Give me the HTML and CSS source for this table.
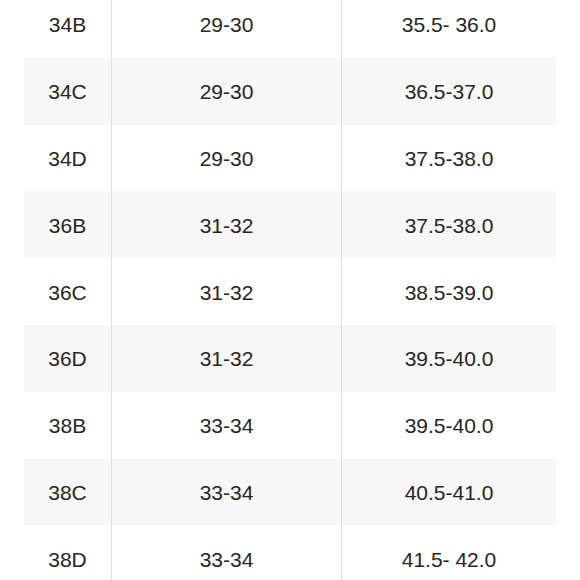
FILE: index.html
```html
<!DOCTYPE html>
<html>
<head>
<meta charset="utf-8">
<link rel="stylesheet" href="styles.css">
</head>
<body>
<div class="chart">
  <div class="row"><div class="cell c1">34B</div><div class="cell c2">29-30</div><div class="cell c3">35.5- 36.0</div></div>
  <div class="row alt"><div class="cell c1">34C</div><div class="cell c2">29-30</div><div class="cell c3">36.5-37.0</div></div>
  <div class="row"><div class="cell c1">34D</div><div class="cell c2">29-30</div><div class="cell c3">37.5-38.0</div></div>
  <div class="row alt"><div class="cell c1">36B</div><div class="cell c2">31-32</div><div class="cell c3">37.5-38.0</div></div>
  <div class="row"><div class="cell c1">36C</div><div class="cell c2">31-32</div><div class="cell c3">38.5-39.0</div></div>
  <div class="row alt"><div class="cell c1">36D</div><div class="cell c2">31-32</div><div class="cell c3">39.5-40.0</div></div>
  <div class="row"><div class="cell c1">38B</div><div class="cell c2">33-34</div><div class="cell c3">39.5-40.0</div></div>
  <div class="row alt"><div class="cell c1">38C</div><div class="cell c2">33-34</div><div class="cell c3">40.5-41.0</div></div>
  <div class="row"><div class="cell c1">38D</div><div class="cell c2">33-34</div><div class="cell c3">41.5- 42.0</div></div>
</div>
</body>
</html>
```
FILE: styles.css
```css
html, body {
  margin: 0;
  padding: 0;
  background: #ffffff;
  overflow: hidden;
}
body {
  font-family: "Liberation Sans", Arial, sans-serif;
  font-size: 21px;
  color: #262626;
}
.chart {
  margin: -9px 24px 0 24px;
  width: 532px;
  display: flex;
  flex-direction: column;
}
.row {
  display: grid;
  grid-template-columns: 87px 230px 215px;
  height: 66.8px;
}
.row.alt {
  background: #f7f7f7;
}
.cell {
  display: flex;
  align-items: center;
  justify-content: center;
  padding-top: 2px;
}
.c2, .c3 {
  border-left: 1px solid #e0e0e0;
}
```
